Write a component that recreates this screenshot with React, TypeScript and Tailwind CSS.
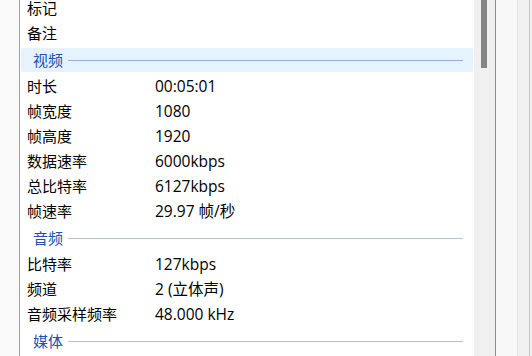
import React from "react";

type Item =
  | { kind: "row"; label: string; value?: string }
  | { kind: "header"; label: string; active?: boolean };

const items: Item[] = [
  { kind: "row", label: "标记" },
  { kind: "row", label: "备注" },
  { kind: "header", label: "视频", active: true },
  { kind: "row", label: "时长", value: "00:05:01" },
  { kind: "row", label: "帧宽度", value: "1080" },
  { kind: "row", label: "帧高度", value: "1920" },
  { kind: "row", label: "数据速率", value: "6000kbps" },
  { kind: "row", label: "总比特率", value: "6127kbps" },
  { kind: "row", label: "帧速率", value: "29.97 帧/秒" },
  { kind: "header", label: "音频" },
  { kind: "row", label: "比特率", value: "127kbps" },
  { kind: "row", label: "频道", value: "2 (立体声)" },
  { kind: "row", label: "音频采样频率", value: "48.000 kHz" },
  { kind: "header", label: "媒体" },
];

function Row({ label, value }: { label: string; value?: string }) {
  return (
    <div className="h-[25px] flex items-center pl-[7px] leading-none">
      <div className="w-[128px] shrink-0">{label}</div>
      <div className="text-[15.5px]">{value ?? ""}</div>
    </div>
  );
}

function Header({ label, active }: { label: string; active?: boolean }) {
  return (
    <div className="h-[28px] py-[2px] pl-[1px] pr-[1px]">
      <div
        className={
          "h-[24px] flex items-center pl-[12px] pr-[10px] rounded-[2px] leading-none " +
          (active ? "bg-[#e5f3ff]" : "")
        }
      >
        <span className="text-[#2150b0]">{label}</span>
        <div
          className={
            "flex-1 ml-[5px] h-[1px] " + (active ? "bg-[#95b1da]" : "bg-[#b9bfd3]")
          }
        />
      </div>
    </div>
  );
}

export default function App() {
  return (
    <div
      className="w-[532px] h-[356px] flex overflow-hidden bg-white text-[15px] text-black"
      style={{ fontFamily: '"Open Sans", "Noto Sans CJK SC", sans-serif' }}
    >
      <div className="w-[19px] shrink-0 bg-[#f9f9f9]" />
      <div className="w-[1px] shrink-0 bg-[#a0a0a0]" />
      <div className="w-[454px] shrink-0 bg-white overflow-hidden">
        <div className="-mt-[4px]">
          {items.map((it, i) =>
            it.kind === "row" ? (
              <Row key={i} label={it.label} value={it.value} />
            ) : (
              <Header key={i} label={it.label} active={it.active} />
            )
          )}
        </div>
      </div>
      <div className="w-[21px] shrink-0 bg-[#f0f0f0] pl-[7px]">
        <div className="w-[6px] h-[68px] bg-[#858585]" />
      </div>
      <div className="w-[1px] shrink-0 bg-[#8a8a96]" />
      <div className="w-[21px] shrink-0 bg-[#f8f8f8]" />
      <div className="w-[1px] shrink-0 bg-[#e3e3e3]" />
      <div className="w-[11px] shrink-0 bg-[#f0f0f0]" />
      <div className="w-[1px] shrink-0 bg-[#c4c4c4]" />
      <div className="w-[2px] shrink-0 bg-[#f0f0f0]" />
    </div>
  );
}
